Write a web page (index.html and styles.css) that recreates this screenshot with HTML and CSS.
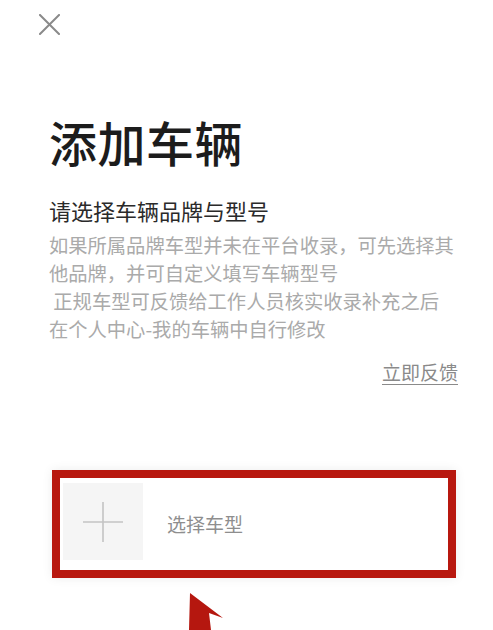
FILE: index.html
```html
<!DOCTYPE html>
<html lang="zh-CN">
<head>
<meta charset="utf-8">
<title>添加车辆</title>
<link rel="stylesheet" href="styles.css">
</head>
<body>
<div class="page">
  <div class="topbar">
    <svg class="close" width="21" height="21" viewBox="0 0 21 21" aria-label="关闭">
      <path d="M1 1 L20 20 M20 1 L1 20" stroke="#8a8a8a" stroke-width="2" fill="none" stroke-linecap="square"/>
    </svg>
  </div>
  <h1 class="title">添加车辆</h1>
  <h2 class="subtitle">请选择车辆品牌与型号</h2>
  <p class="desc">如果所属品牌车型并未在平台收录，可先选择其<br>他品牌，并可自定义填写车辆型号<br>&nbsp;正规车型可反馈给工作人员核实收录补充之后<br>在个人中心-我的车辆中自行修改</p>
  <div class="feedback-row"><a class="feedback">立即反馈</a></div>
  <div class="card">
    <div class="add-box">
      <svg width="40" height="40" viewBox="0 0 40 40">
        <path d="M0 20 H40 M20 0 V40" stroke="#c4c4c4" stroke-width="1.6" fill="none"/>
      </svg>
    </div>
    <span class="card-label">选择车型</span>
  </div>
  <svg class="arrow" width="60" height="45" viewBox="0 0 60 45">
    <polygon points="10,3 43,28 29,23 31,40 13,40 9,40" fill="#b5170f"/>
  </svg>
</div>
</body>
</html>
```

FILE: styles.css
```css
html, body {
  margin: 0;
  padding: 0;
  background: #ffffff;
}
body {
  font-family: "Noto Sans CJK SC", "Noto Sans", sans-serif;
  overflow: hidden;
}
.page {
  position: relative;
  display: flex;
  flex-direction: column;
  padding: 14px 35px 0 49px;
  height: 630px;
  box-sizing: border-box;
}
.topbar {
  display: flex;
  height: 21px;
}
.close {
  margin-left: -10px;
  display: block;
}
.title {
  margin: 82px 0 0 0;
  font-size: 48px;
  line-height: 48px;
  font-weight: 500;
  color: #1c1c1c;
  letter-spacing: 0.5px;
}
.subtitle {
  margin: 34px 0 0 0;
  font-size: 22px;
  line-height: 22px;
  font-weight: 400;
  color: #2a2a2a;
}
.desc {
  margin: 10px 0 0 0;
  font-size: 19.3px;
  line-height: 28px;
  color: #aaaaaa;
  white-space: nowrap;
}
.feedback-row {
  display: flex;
  justify-content: flex-end;
  margin-top: 17px;
}
.feedback {
  font-size: 19px;
  line-height: 24px;
  color: #8a8a8a;
  text-decoration: underline;
  text-underline-offset: 4px;
  text-decoration-thickness: 1px;
}
.card {
  display: flex;
  align-items: flex-start;
  margin: 86px 2px 0 3px;
  height: 108px;
  box-sizing: border-box;
  border: 8px solid #b8180f;
  padding: 5px 3px 0 3px;
  background: #ffffff;
  box-shadow: 0 0 10px rgba(0, 0, 0, 0.08);
}
.add-box {
  width: 80px;
  height: 77px;
  background: #f5f5f5;
  display: flex;
  align-items: center;
  justify-content: center;
}
.card-label {
  margin-left: 24px;
  align-self: center;
  margin-top: -6px;
  font-size: 19px;
  line-height: 24px;
  color: #8e8e8e;
}
.arrow {
  position: absolute;
  left: 180px;
  top: 590px;
}
```
